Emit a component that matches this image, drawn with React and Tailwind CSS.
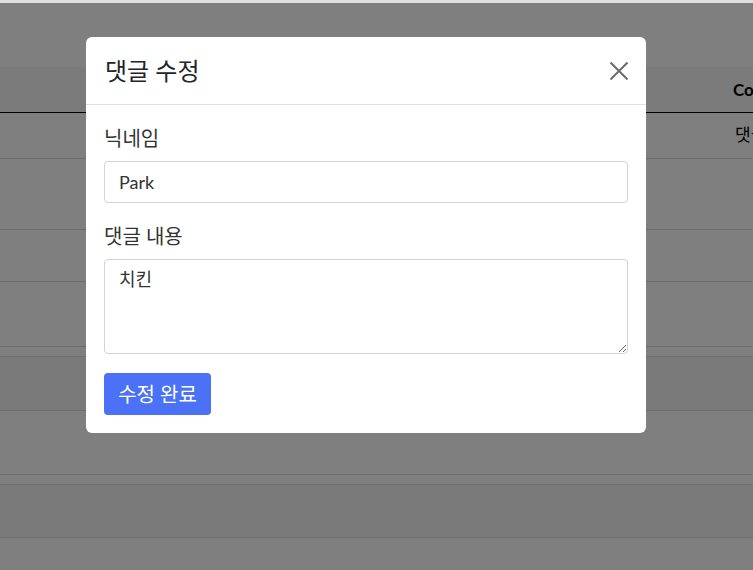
import React, { useState } from 'react';

const rows = [
  { h: 'h-[46px]', bg: 'bg-white', text: '댓글' },
  { h: 'h-[71px]', bg: 'bg-white' },
  { h: 'h-[52px]', bg: 'bg-white' },
  { h: 'h-[65px]', bg: 'bg-white' },
  { h: 'h-[10px]', bg: 'bg-white' },
  { h: 'h-[54px]', bg: 'bg-[#f4f4f4]' },
  { h: 'h-[64px]', bg: 'bg-white' },
  { h: 'h-[10px]', bg: 'bg-white' },
  { h: 'h-[53px]', bg: 'bg-[#f4f4f4]' },
  { h: 'h-[40px]', bg: 'bg-white' },
];

const App = () => {
  const [nick, setNick] = useState('Park');
  const [content, setContent] = useState('치킨');

  return (
    <div
      className="relative h-[570px] w-full overflow-hidden bg-white"
      style={{ fontFamily: 'Lato, "Noto Sans CJK KR", sans-serif' }}
    >
      {/* page behind the modal */}
      <div className="h-[3px] bg-[#dedede]" />
      <div className="h-[64px] bg-white" />
      <div className="flex h-[46px] items-center whitespace-nowrap border-b border-black bg-[#f6f6f6] pl-[733px] text-[17px] font-bold text-black">
        Content
      </div>
      {rows.map((r, i) => (
        <div
          key={i}
          className={`${r.h} ${r.bg} whitespace-nowrap border-b border-[#dcdcdc] pl-[735px] pt-[9px] text-[17px] text-black`}
        >
          {r.text}
        </div>
      ))}

      {/* overlay */}
      <div className="absolute inset-x-0 bottom-0 top-[3px] bg-black/50">
        <div className="ml-[86px] mt-[34px] w-[560px] rounded-[6px] bg-white">
          <div className="flex h-[68px] items-center justify-between border-b border-[#dee2e6] pl-[19px] pr-[18px]">
            <h5 className="text-[24px] leading-none text-[#212529]">댓글 수정</h5>
            <button className="text-[#6c6c6c]">
              <svg className="block" width="18" height="18" viewBox="0 0 18 18" fill="none" stroke="currentColor" strokeWidth="2">
                <path d="M0.5 0.5L17.5 17.5M17.5 0.5L0.5 17.5" />
              </svg>
            </button>
          </div>
          <div className="px-[18px] pb-[18px] pt-[20px] text-[#333]">
            <label className="block text-[20px] leading-[27px]">닉네임</label>
            <input
              className="mt-[9px] block h-[42px] w-full rounded-[4px] border border-[#ced4da] px-[14px] text-[18px] text-[#333] outline-none"
              value={nick}
              onChange={(e) => setNick(e.target.value)}
            />
            <label className="mt-[20px] block text-[20px] leading-[27px]">댓글 내용</label>
            <textarea
              className="mt-[9px] block h-[95px] w-full rounded-[4px] border border-[#ced4da] px-[14px] py-[6px] text-[18px] leading-[27px] text-[#333] outline-none"
              value={content}
              onChange={(e) => setContent(e.target.value)}
            />
            <button className="mt-[19px] h-[42px] w-[107px] rounded-[4px] bg-[#4a71f6] text-[20px] text-white">
              수정 완료
            </button>
          </div>
        </div>
      </div>
    </div>
  );
};

export default App;
